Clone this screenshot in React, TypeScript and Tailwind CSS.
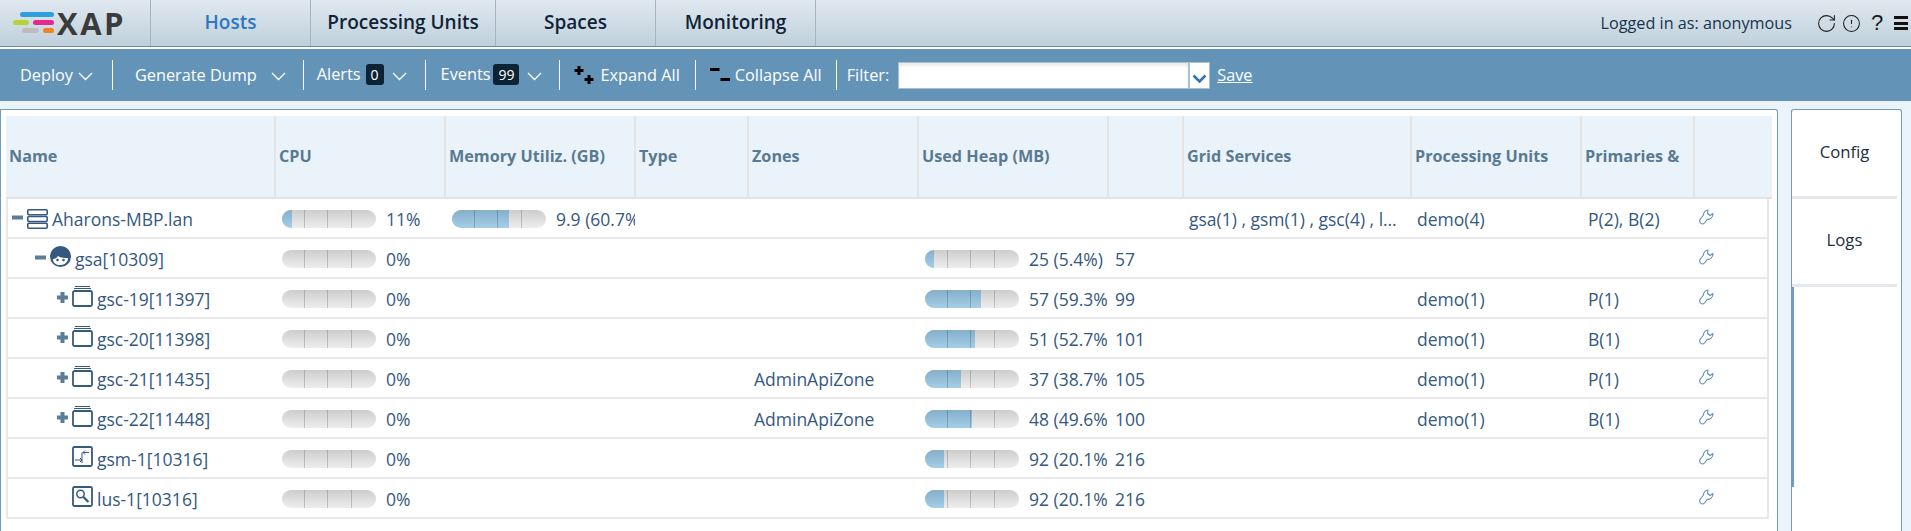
import { CircleAlert, RotateCw } from 'lucide-react';

const HEAD_GRID = 'grid grid-cols-[270px_170px_190px_113px_170px_190px_75px_228px_170px_113px_70px]';
const ROW_GRID = 'grid grid-cols-[267px_170px_190px_113px_170px_190px_75px_228px_170px_113px_71px]';

const TABS = [
  { label: 'Hosts', w: 'w-[160px]', active: true },
  { label: 'Processing Units', w: 'w-[185px]', active: false },
  { label: 'Spaces', w: 'w-[160px]', active: false },
  { label: 'Monitoring', w: 'w-[160px]', active: false },
];

const HEADERS = ['Name', 'CPU', 'Memory Utiliz. (GB)', 'Type', 'Zones', 'Used Heap (MB)', '', 'Grid Services', 'Processing Units', 'Primaries &', ''];

type Row = {
  name: string;
  level: number;
  toggle?: 'plus' | 'minus';
  icon: 'host' | 'agent' | 'gsc' | 'gsm' | 'lus';
  cpu: number;
  mem?: string;
  memPct?: number;
  zone?: string;
  heap?: string;
  heapPct?: number;
  threads?: string;
  services?: string;
  pu?: string;
  primaries?: string;
};

const ROWS: Row[] = [
  { name: 'Aharons-MBP.lan', level: 0, toggle: 'minus', icon: 'host', cpu: 11, mem: '9.9 (60.7%)', memPct: 60.7, services: 'gsa(1) , gsm(1) , gsc(4) , lus(1)', pu: 'demo(4)', primaries: 'P(2), B(2)' },
  { name: 'gsa[10309]', level: 1, toggle: 'minus', icon: 'agent', cpu: 0, heap: '25 (5.4%)', heapPct: 5.4, threads: '57' },
  { name: 'gsc-19[11397]', level: 2, toggle: 'plus', icon: 'gsc', cpu: 0, heap: '57 (59.3%)', heapPct: 59.3, threads: '99', pu: 'demo(1)', primaries: 'P(1)' },
  { name: 'gsc-20[11398]', level: 2, toggle: 'plus', icon: 'gsc', cpu: 0, heap: '51 (52.7%)', heapPct: 52.7, threads: '101', pu: 'demo(1)', primaries: 'B(1)' },
  { name: 'gsc-21[11435]', level: 2, toggle: 'plus', icon: 'gsc', cpu: 0, zone: 'AdminApiZone', heap: '37 (38.7%)', heapPct: 38.7, threads: '105', pu: 'demo(1)', primaries: 'P(1)' },
  { name: 'gsc-22[11448]', level: 2, toggle: 'plus', icon: 'gsc', cpu: 0, zone: 'AdminApiZone', heap: '48 (49.6%)', heapPct: 49.6, threads: '100', pu: 'demo(1)', primaries: 'B(1)' },
  { name: 'gsm-1[10316]', level: 2, icon: 'gsm', cpu: 0, heap: '92 (20.1%)', heapPct: 20.1, threads: '216' },
  { name: 'lus-1[10316]', level: 2, icon: 'lus', cpu: 0, heap: '92 (20.1%)', heapPct: 20.1, threads: '216' },
];

function Logo() {
  return (
    <div className="flex items-center w-[150px] pl-[13px]">
      <div className="flex flex-col gap-[3px] w-[41px] shrink-0 -mt-[2px]">
        <div className="flex justify-end"><div className="h-[5px] w-[34px] rounded-full bg-[#2f9fe0]" /></div>
        <div className="flex gap-[4px]">
          <div className="h-[5px] w-[16px] rounded-full bg-[#b5d334]" />
          <div className="h-[5px] w-[21px] rounded-full bg-[#e5288c]" />
        </div>
        <div className="flex gap-[4px] pl-[9px]">
          <div className="h-[5px] w-[17px] rounded-full bg-[#bdbdbd]" />
          <div className="h-[5px] w-[11px] rounded-full bg-[#f08324]" />
        </div>
      </div>
      <span className="ml-[3px] text-[31px] leading-none font-bold tracking-[2.500px] text-[#3b3b3b]">XAP</span>
    </div>
  );
}

function Sep({ ml }: { ml: string }) {
  return <div className={`h-[30px] w-px bg-white shrink-0 ${ml}`} />;
}

function Chev({ ml }: { ml: string }) {
  return (
    <svg width="15" height="9" viewBox="0 0 15 9" fill="none" stroke="currentColor" strokeWidth="1.300" className={`shrink-0 mt-[2px] ${ml}`}>
      <path d="M1 1l6.500 6.500L14 1" />
    </svg>
  );
}

function Badge({ children }: { children: string }) {
  return (
    <span className="h-[21px] px-[5px] min-w-[18px] rounded-[3px] bg-[#0c2335] text-white text-[14px] leading-[21px] text-center">{children}</span>
  );
}

function Toolbar() {
  return (
    <div className="flex items-center h-[52px] bg-[#6394b7] text-white text-[16.300px] shrink-0">
      <span className="ml-[20px]">Deploy</span>
      <Chev ml="ml-[5px]" />
      <Sep ml="ml-[19px]" />
      <span className="ml-[22px]">Generate Dump</span>
      <Chev ml="ml-[14px]" />
      <Sep ml="ml-[17px]" />
      <span className="ml-[13px] -mt-[2px]">Alerts</span>
      <span className="ml-[5px] flex -mt-[2px]"><Badge>0</Badge></span>
      <Chev ml="ml-[8px]" />
      <Sep ml="ml-[18px]" />
      <span className="ml-[15px] -mt-[2px]">Events</span>
      <span className="ml-[3px] flex -mt-[2px]"><Badge>99</Badge></span>
      <Chev ml="ml-[8px]" />
      <Sep ml="ml-[17px]" />
      <svg width="20" height="20" viewBox="0 0 20 20" className="ml-[14px] text-black" fill="currentColor">
        <path d="M3.500 1h3v3h3v3h-3v3h-3V7h-3V4h3zM13.500 10h3v3h3v3h-3v3h-3v-3h-3v-3h3z" />
      </svg>
      <span className="ml-[6px]">Expand All</span>
      <Sep ml="ml-[15px]" />
      <svg width="20" height="20" viewBox="0 0 20 20" className="ml-[14px] text-black" fill="currentColor">
        <path d="M0 3h9.500v3H0zM10.500 13H20v3h-9.500z" />
      </svg>
      <span className="ml-[5px]">Collapse All</span>
      <Sep ml="ml-[14px]" />
      <span className="ml-[10px]">Filter:</span>
      <div className="ml-[9px] h-[27px] w-[291px] bg-white border border-[#a9c0d2] shadow-[inset_0_3px_3px_rgba(0,0,0,0.08)]" />
      <div className="flex items-center justify-center h-[27px] w-[21px] mt-[1px] bg-white border border-[#a9c0d2]">
        <svg width="15" height="9" viewBox="0 0 15 9" fill="none" stroke="#2f74b5" strokeWidth="2.600" className="mt-[5px]">
          <path d="M1.500 1.500l6 6 6-6" />
        </svg>
      </div>
      <span className="ml-[7px] underline">Save</span>
    </div>
  );
}

function TopBar() {
  return (
    <div className="flex items-stretch h-[47px] bg-gradient-to-b from-[#e0e8ef] to-[#bfd0db] border-b border-[#71899c] shrink-0">
      <Logo />
      {TABS.map(t => (
        <div
          key={t.label}
          className={`${t.w} flex items-center justify-center pb-[1px] border-l border-[#a3b5c3] text-[19px] font-semibold ${t.active ? 'text-[#2a78c0]' : 'text-[#0f2438]'}`}
        >
          {t.label}
        </div>
      ))}
      <div className="border-l border-[#a3b5c3]" />
      <div className="flex items-center ml-auto text-[#17344f]">
        <span className="text-[16.200px]">Logged in as: anonymous</span>
        <RotateCw size={21} strokeWidth={1.200} className="ml-[24px] text-[#1c1c1c]" />
        <CircleAlert size={19} strokeWidth={1.300} className="ml-[5px] text-[#1c1c1c]" />
        <span className="ml-[10px] w-[11px] text-[22px] leading-none text-[#1c1c1c] font-['Liberation_Sans',sans-serif]">?</span>
        <div className="ml-[12px] mr-[3px] flex flex-col gap-[2.500px] w-[14px]">
          <div className="h-[3px] bg-[#111]" />
          <div className="h-[3px] bg-[#111]" />
          <div className="h-[3px] bg-[#111]" />
        </div>
      </div>
    </div>
  );
}

function Bar({ pct }: { pct: number }) {
  const w = pct > 0 ? Math.max(9, pct * 0.94) : 0;
  return (
    <div className="relative flex h-[18px] w-[94px] shrink-0 overflow-hidden rounded-full bg-gradient-to-b from-[#cdcdcd] to-[#eeeeee]">
      <div className="absolute inset-y-0 left-0 bg-gradient-to-b from-[#84aeca] to-[#a5cee8]" style={{ width: w }} />
      <div className="relative w-[23px] border-r border-[#0000002e]" />
      <div className="relative w-[23px] border-r border-[#0000002e]" />
      <div className="relative w-[24px] border-r border-[#0000002e]" />
    </div>
  );
}

function BarCell({ pct, label }: { pct: number; label: string }) {
  return (
    <div className="flex items-center pl-[7px] overflow-hidden whitespace-nowrap">
      <Bar pct={pct} />
      <span className="ml-[10px]">{label}</span>
    </div>
  );
}

function Toggle({ kind }: { kind?: 'plus' | 'minus' }) {
  if (!kind) return <div className="w-[11px] shrink-0" />;
  return (
    <svg width="11" height="11" viewBox="0 0 11 11" className="shrink-0 -mt-[3px] text-[#5d7d96]" fill="currentColor">
      {kind === 'minus' ? <rect x="0" y="3.500" width="11" height="4" /> : <path d="M3.500 0h4v3.500H11v4H7.500V11h-4V7.500H0v-4h3.500z" />}
    </svg>
  );
}

function NodeIcon({ icon }: { icon: Row['icon'] }) {
  const c = '#36597f';
  if (icon === 'host') {
    return (
      <svg width="21" height="20" viewBox="0 0 21 20" fill="none" stroke={c} strokeWidth="1.600" className="shrink-0 -mt-[1px]">
        <rect x="0.800" y="0.800" width="19.400" height="5" rx="1" />
        <rect x="0.800" y="7.500" width="19.400" height="5" rx="1" />
        <rect x="0.800" y="14.200" width="19.400" height="5" rx="1" />
      </svg>
    );
  }
  if (icon === 'agent') {
    return (
      <svg width="21" height="21" viewBox="0 0 21 21" className="shrink-0 -mt-[6px]">
        <circle cx="10.500" cy="10.500" r="10.500" fill={c} />
        <path d="M3 13c2 0 4-1 5-3 3 2 7 2 10 2 0 4-3 7-7.500 7S3 17 3 13z" fill="#fff" />
        <circle cx="7.500" cy="14" r="1.300" fill={c} />
        <circle cx="13.500" cy="14" r="1.300" fill={c} />
      </svg>
    );
  }
  if (icon === 'gsc') {
    return (
      <svg width="21" height="21" viewBox="0 0 21 21" fill="none" stroke={c} className="shrink-0 -mt-[5px]">
        <path d="M3 0.500h15M2 2.500h17" strokeWidth="1" />
        <rect x="1" y="5" width="19" height="15" rx="1.500" strokeWidth="1.800" />
      </svg>
    );
  }
  if (icon === 'gsm') {
    return (
      <svg width="21" height="21" viewBox="0 0 21 21" fill="none" stroke={c} className="shrink-0 -mt-[5px]">
        <rect x="1" y="1" width="19" height="19" rx="1.500" strokeWidth="1.800" />
        <path d="M17 6.500H11M13 4.500l-2 2 2 2M10 6.500V17M3 14h7M8 12l2 2-2 2" strokeWidth="1" />
      </svg>
    );
  }
  return (
    <svg width="21" height="21" viewBox="0 0 21 21" fill="none" stroke={c} className="shrink-0 -mt-[5px]">
      <rect x="1" y="1" width="19" height="19" rx="1.500" strokeWidth="1.800" />
      <circle cx="8.500" cy="8" r="3.700" strokeWidth="1.500" />
      <path d="M11.500 11l5 5" strokeWidth="2.200" />
    </svg>
  );
}

function WrenchIcon() {
  return (
    <svg width="15" height="16" viewBox="0 0 15 16" fill="none" stroke="#5c8cc0" strokeWidth="1.100" strokeLinejoin="round">
      <path d="M9 1C6.500 1.500 4.500 3 4.500 6L1 10.500C0 12.500 1.500 15 3.500 15 5 15 6 14 8 10.500 11 10.500 14 8.500 14 4.500L11 6.500 8.500 4.500z" />
    </svg>
  );
}

const INDENTS = ['pl-[4px]', 'pl-[27px]', 'pl-[49px]'];

function TableRow({ row }: { row: Row }) {
  return (
    <div className={`${ROW_GRID} h-[40px] w-[1763px] pt-[2px] items-center border-b-2 border-r-2 border-l-2 border-[#e9e9e9] text-[#34597f] text-[17.500px]`}>
      <div className={`flex items-center whitespace-nowrap ${INDENTS[row.level]}`}>
        <Toggle kind={row.toggle} />
        <div className="ml-[4px] flex"><NodeIcon icon={row.icon} /></div>
        <span className="ml-[4px]">{row.name}</span>
      </div>
      <BarCell pct={row.cpu} label={`${row.cpu}%`} />
      {row.mem ? <BarCell pct={row.memPct ?? 0} label={row.mem} /> : <div />}
      <div />
      <div className="pl-[6px] whitespace-nowrap">{row.zone}</div>
      {row.heap ? <BarCell pct={row.heapPct ?? 0} label={row.heap} /> : <div />}
      <div className="pl-[7px]">{row.threads}</div>
      <div className="pl-[6px] pr-[10px] truncate">{row.services}</div>
      <div className="pl-[6px]">{row.pu}</div>
      <div className="pl-[7px]">{row.primaries}</div>
      <div className="pl-[5px] -mt-[4px]"><WrenchIcon /></div>
    </div>
  );
}

function SidePanel() {
  return (
    <div className="w-[111px] ml-[13px] self-stretch bg-white border-x border-t border-[#6f9cc3] rounded-t-[3px] text-[16.700px] text-[#1a2e40]">
      <div className="h-[86px] flex items-center justify-center pr-[4px] pb-[2px] border-l border-[#6f9cc3] -ml-px">Config</div>
      <div className="h-[3px] mr-[4px] bg-[#e5e8ec]" />
      <div className="h-[85px] flex items-center justify-center pr-[4px] pb-[3px] border-l border-[#6f9cc3] -ml-px">Logs</div>
      <div className="h-[3px] mr-[4px] bg-[#e5e8ec]" />
      <div className="h-[200px] border-l-[3px] border-[#6f9cc3] -ml-px" />
    </div>
  );
}

export default function App() {
  return (
    <div className="h-[531px] overflow-hidden flex flex-col bg-white font-['Open_Sans',sans-serif]">
      <TopBar />
      <div className="h-[2px] shrink-0" />
      <Toolbar />
      <div className="flex flex-1 pt-[8px] bg-[#ebf3fb]">
        <div className="w-[1778px] self-stretch bg-white border-x border-t border-[#6f9cc3] rounded-tr-[3px] pt-[6px] pl-[5px]">
          <div className="flex h-[83px] w-[1766px] bg-[#ebf3fa] border-b-2 border-[#e3e3e3]">
            <div className={`${HEAD_GRID} font-bold text-[#597a93] text-[16.200px] items-center`}>
              {HEADERS.map((h, i) => (
                <div key={i} className={`h-full flex items-center pl-[3px] whitespace-nowrap overflow-hidden ${i < HEADERS.length - 1 ? 'border-r-2 border-[#e5e5e5]' : ''}`}>
                  {h}
                </div>
              ))}
            </div>
          </div>
          {ROWS.map(r => <TableRow key={r.name} row={r} />)}
        </div>
        <SidePanel />
      </div>
    </div>
  );
}
